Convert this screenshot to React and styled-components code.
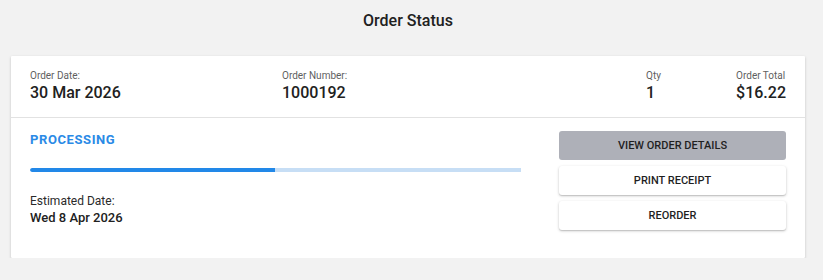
import React from "react";
import styled, { createGlobalStyle } from "styled-components";

const Global = createGlobalStyle`
  html, body { margin: 0; padding: 0; background: #f2f2f2; }
  body { font-family: Roboto, "Liberation Sans", Arial, sans-serif; color: #212121; }
`;

const Page = styled.div`
  width: 794px;
  margin-left: 11px;
`;

const Title = styled.h1`
  margin: 0;
  height: 56px;
  padding-top: 11px;
  box-sizing: border-box;
  font-size: 16px;
  line-height: 20px;
  font-weight: 500;
  text-align: center;
  color: #212121;
`;

const Card = styled.section`
  background: #fff;
  border-radius: 1px;
  box-shadow: 0 1px 3px rgba(0, 0, 0, 0.18), 0 1px 1px rgba(0, 0, 0, 0.08);
`;

const Header = styled.div`
  display: grid;
  grid-template-columns: 252px 1fr 90px auto;
  padding: 14px 19px 14px;
  border-bottom: 1px solid #e2e2e2;
`;

const Field = styled.div`
  display: flex;
  flex-direction: column;
`;

const Label = styled.span`
  font-size: 10px;
  line-height: 12px;
  color: #5f5f5f;
`;

const Value = styled.span`
  font-size: 16px;
  line-height: 20px;
  font-weight: 500;
  color: #212121;
  margin-top: 1px;
`;

const Body = styled.div`
  display: grid;
  grid-template-columns: 1fr 227px;
  column-gap: 38px;
  padding: 13px 19px 28px;
`;

const StatusCol = styled.div`
  display: flex;
  flex-direction: column;
`;

const Status = styled.div`
  margin-top: 1px;
  font-size: 13px;
  line-height: 16px;
  font-weight: 700;
  letter-spacing: 0.6px;
  color: #2a8ae6;
`;

const Track = styled.div`
  margin-top: 20px;
  height: 4px;
  background: #c7def5;
  border-radius: 2px 0 0 2px;
  overflow: hidden;
`;

const Fill = styled.div`
  height: 100%;
  background: #2288e8;
  border-radius: 2px 0 0 2px;
`;

const EstLabel = styled.span`
  margin-top: 22px;
  font-size: 12px;
  line-height: 14px;
  color: #2a2a2a;
`;

const EstValue = styled.span`
  margin-top: 2px;
  font-size: 13px;
  line-height: 16px;
  font-weight: 500;
  color: #212121;
`;

const Actions = styled.div`
  display: flex;
  flex-direction: column;
  gap: 6px;
`;

const Button = styled.button`
  height: 29px;
  border: none;
  border-radius: 3px;
  font-family: inherit;
  font-size: 11px;
  font-weight: 500;
  color: #1f1f1f;
  text-transform: uppercase;
  background: ${(p) => (p.$primary ? "#aeb0b8" : "#fff")};
  box-shadow: ${(p) =>
    p.$primary
      ? "none"
      : "0 1px 3px rgba(0,0,0,0.22), 0 1px 1px rgba(0,0,0,0.1)"};
  cursor: pointer;
`;

export default function App() {
  const progress = (275 - 30) / (521 - 30);
  return (
    <>
      <Global />
      <Page>
        <Title>Order Status</Title>
        <Card>
          <Header>
            <Field>
              <Label>Order Date:</Label>
              <Value>30 Mar 2026</Value>
            </Field>
            <Field>
              <Label>Order Number:</Label>
              <Value>1000192</Value>
            </Field>
            <Field>
              <Label>Qty</Label>
              <Value>1</Value>
            </Field>
            <Field>
              <Label>Order Total</Label>
              <Value>$16.22</Value>
            </Field>
          </Header>
          <Body>
            <StatusCol>
              <Status>PROCESSING</Status>
              <Track>
                <Fill style={{ width: `${progress * 100}%` }} />
              </Track>
              <EstLabel>Estimated Date:</EstLabel>
              <EstValue>Wed 8 Apr 2026</EstValue>
            </StatusCol>
            <Actions>
              <Button $primary>View Order Details</Button>
              <Button>Print Receipt</Button>
              <Button>Reorder</Button>
            </Actions>
          </Body>
        </Card>
      </Page>
    </>
  );
}
